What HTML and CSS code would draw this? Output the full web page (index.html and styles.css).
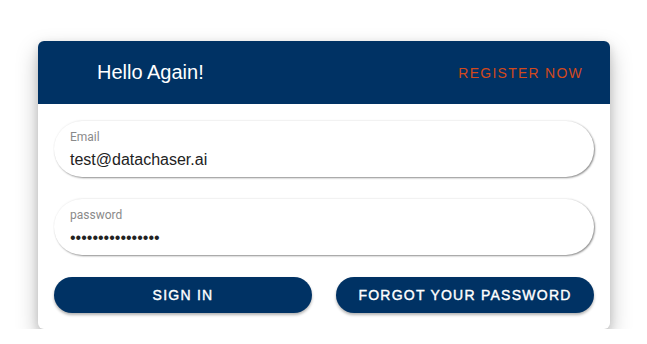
FILE: index.html
```html
<!DOCTYPE html>
<html>
<head>
<meta charset="utf-8">
<link rel="stylesheet" href="styles.css">
</head>
<body>
<div class="page">
  <div class="card">
    <div class="card-header">
      <h1 class="title">Hello Again!</h1>
      <a class="register">REGISTER NOW</a>
    </div>
    <div class="card-body">
      <div class="field">
        <span class="field-label">Email</span>
        <span class="field-value">test@datachaser.ai</span>
      </div>
      <div class="field">
        <span class="field-label">password</span>
        <span class="field-value dots">••••••••••••••••</span>
      </div>
      <div class="actions">
        <button class="btn">SIGN IN</button>
        <button class="btn">FORGOT YOUR PASSWORD</button>
      </div>
    </div>
  </div>
</div>
</body>
</html>
```
FILE: styles.css
```css
html, body {
  margin: 0;
  padding: 0;
  background: #ffffff;
}
.page {
  padding: 41px 37px 0 38px;
  font-family: "Liberation Sans", Arial, sans-serif;
}
.card {
  width: 572px;
  background: #fff;
  border-radius: 6px;
  overflow: hidden;
  box-shadow: 0 10px 22px rgba(0,0,0,0.26), 0 3px 8px rgba(0,0,0,0.12);
}
.card-header {
  height: 63px;
  background: #003264;
  display: flex;
  align-items: center;
  justify-content: space-between;
  padding: 0 27px 0 59px;
}
.title {
  margin: 0;
  font-size: 20px;
  font-weight: normal;
  color: #fff;
}
.register {
  color: #d2491c;
  font-size: 14px;
  letter-spacing: 1.25px;
}
.card-body {
  padding: 17px 16px 16px;
  display: flex;
  flex-direction: column;
}
.field {
  height: 56px;
  box-sizing: border-box;
  border-radius: 28px;
  background: #fff;
  box-shadow: 1px 1px 2px rgba(0,0,0,0.45), 0 -1px 2px rgba(0,0,0,0.04);
  padding: 9px 16px 0;
  display: flex;
  flex-direction: column;
  margin-bottom: 22px;
}
.field-label {
  font-family: Roboto, sans-serif;
  font-size: 12px;
  color: #8a8a8a;
  line-height: 14px;
}
.field-value {
  font-size: 16px;
  color: #222;
  line-height: 20px;
  margin-top: 6px;
}
.dots {
  color: #222;
}
.actions {
  display: flex;
  gap: 24px;
}
.btn {
  flex: 1;
  height: 36px;
  border: none;
  border-radius: 18px;
  background: #003264;
  color: #fff;
  font-family: "Liberation Sans", Arial, sans-serif;
  font-size: 14px;
  font-weight: normal;
  -webkit-text-stroke: 0.4px #fff;
  letter-spacing: 1.25px;
  box-shadow: 0 2px 3px rgba(0,0,0,0.3);
  padding: 0;
}
```
